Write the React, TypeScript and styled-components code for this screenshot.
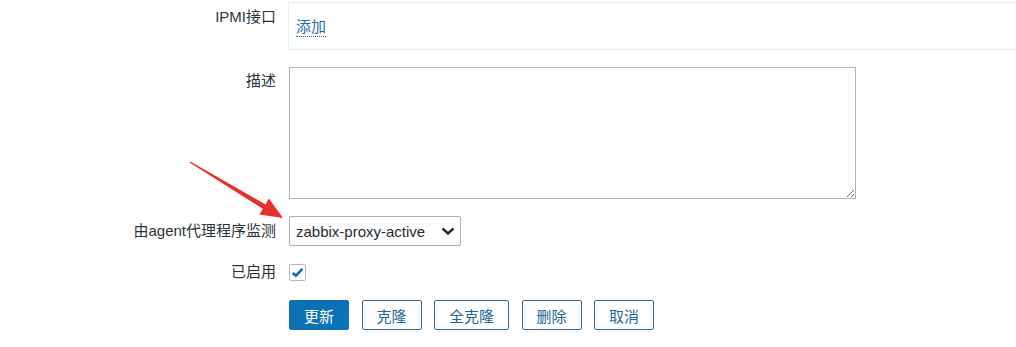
import styled, { createGlobalStyle } from 'styled-components'

const GlobalStyle = createGlobalStyle`
  html, body {
    margin: 0;
    padding: 0;
    background: #fff;
    overflow: hidden;
  }
  body {
    font-family: 'Liberation Sans', 'Noto Sans CJK SC', sans-serif;
    font-size: 15px;
    color: #1f2c33;
  }
`

const blue = '#0d72b5'

export default function App() {
  return (
    <Page>
      <GlobalStyle />
      <Row $space={17}>
        <Label $top={6}>IPMI接口</Label>
        <InterfaceBox>
          <AddLink href='#'>添加</AddLink>
        </InterfaceBox>
      </Row>

      <Row $space={17}>
        <Label $top={5}>描述</Label>
        <Description />
      </Row>

      <Row $space={17} $center>
        <Label>由agent代理程序监测</Label>
        <SelectWrap>
          <Select defaultValue='active'>
            <option value='active'>zabbix-proxy-active</option>
          </Select>
          <Chevron viewBox='0 0 14 8' width='14' height='8'>
            <path d='M1.5 1.5 L7 6.5 L12.5 1.5' fill='none' stroke='#1f2c33' strokeWidth='2.4' />
          </Chevron>
        </SelectWrap>
      </Row>

      <Row $space={19} $center>
        <Label>已启用</Label>
        <CheckBox>
          <svg viewBox='0 0 16 16' width='13' height='13'>
            <path d='M2 8.5 L6 12 L14 3.5' fill='none' stroke='#1c6ea4' strokeWidth='3.2' />
          </svg>
        </CheckBox>
      </Row>

      <Row $space={0}>
        <Label />
        <Buttons>
          <Button $primary>更新</Button>
          <Button>克隆</Button>
          <Button>全克隆</Button>
          <Button>删除</Button>
          <Button>取消</Button>
        </Buttons>
      </Row>

      {/* annotation arrow drawn on top of the screenshot */}
      <Arrow viewBox='0 0 1016 347' width='1016' height='347'>
        <polygon
          points='190.3,161.4 265.5,204.4 268.8,198.6 283,218 259.4,214.4 262.9,208.8 189.6,162.6'
          fill='#e8302a'
        />
      </Arrow>
    </Page>
  )
}

type TRow = {
  $space: number
  $center?: boolean
}

const Page = styled.div`
  position: relative;
  width: 1016px;
  height: 347px;
  padding-top: 2px;
  box-sizing: border-box;
`

const Row = styled.div<TRow>`
  display: flex;
  align-items: ${p => (p.$center ? 'center' : 'flex-start')};
  column-gap: 12px;
  margin-bottom: ${p => p.$space}px;
`

const Label = styled.div<{ $top?: number }>`
  width: 276px;
  flex-shrink: 0;
  text-align: right;
  line-height: 18px;
  padding-top: ${p => p.$top ?? 0}px;
  color: #2a3338;
`

const InterfaceBox = styled.div`
  flex: 1;
  height: 48px;
  margin-right: -4px;
  box-sizing: border-box;
  border: 1px solid #e9ecee;
  border-left-color: #eef0f2;
  display: flex;
  align-items: center;
  padding: 2px 7px 0;
`

const AddLink = styled.a`
  color: #1f6ea8;
  text-decoration: none;
  border-bottom: 1px dotted #1f6ea8;
  line-height: 18px;
`

const Description = styled.textarea`
  display: block;
  width: 567px;
  height: 132px;
  margin: 0 0 0 1px;
  box-sizing: border-box;
  border: 1px solid #b4b4b4;
  border-radius: 0;
  resize: both;
  outline: none;
`

const SelectWrap = styled.div`
  position: relative;
  margin-left: 1px;
`

const Select = styled.select`
  display: block;
  appearance: none;
  width: 172px;
  height: 30px;
  box-sizing: border-box;
  padding: 0 0 0 6px;
  border: 1px solid #aeaeae;
  border-radius: 2px;
  background: #fff;
  font: inherit;
  font-size: 15px;
  color: #1f2c33;
`

const Chevron = styled.svg`
  position: absolute;
  right: 6px;
  top: 11px;
  pointer-events: none;
`

const CheckBox = styled.span`
  width: 17px;
  height: 17px;
  margin-left: 1px;
  box-sizing: border-box;
  border: 1px solid #b8b8b8;
  border-radius: 2px;
  display: flex;
  align-items: center;
  justify-content: center;
`

const Buttons = styled.div`
  display: flex;
  column-gap: 12.5px;
  margin-left: 1px;
`

const Button = styled.button<{ $primary?: boolean }>`
  height: 30px;
  padding: 0 14px;
  box-sizing: border-box;
  border-radius: 2px;
  font: inherit;
  font-size: 15px;
  cursor: pointer;
  border: 1px solid ${p => (p.$primary ? blue : '#2f6a90')};
  background: ${p => (p.$primary ? blue : '#fff')};
  color: ${p => (p.$primary ? '#fff' : '#1f6696')};
`

const Arrow = styled.svg`
  position: absolute;
  left: 0;
  top: 0;
  pointer-events: none;
`
